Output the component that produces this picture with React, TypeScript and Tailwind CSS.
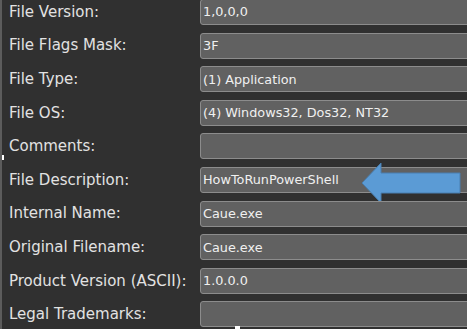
import React from 'react';

const ROWS: { label: string; value: string }[] = [
  { label: 'File Version:', value: '1,0,0,0' },
  { label: 'File Flags Mask:', value: '3F' },
  { label: 'File Type:', value: '(1) Application' },
  { label: 'File OS:', value: '(4) Windows32, Dos32, NT32' },
  { label: 'Comments:', value: '' },
  { label: 'File Description:', value: 'HowToRunPowerShell' },
  { label: 'Internal Name:', value: 'Caue.exe' },
  { label: 'Original Filename:', value: 'Caue.exe' },
  { label: 'Product Version (ASCII):', value: '1.0.0.0' },
  { label: 'Legal Trademarks:', value: '' },
];

function Arrow() {
  return (
    <svg className="absolute left-[160px] top-[-6px]" width="102" height="44" viewBox="0 0 102 44">
      <path d="M1 21 L20 1 L20 11 L99 11 L99 31 L20 31 L20 41 Z" fill="#5b9bd5" stroke="#4a7fb0" strokeWidth="1" />
    </svg>
  );
}

export default function App() {
  return (
    <div className="relative w-[467px] h-[329px] overflow-hidden bg-[#303030] border-l-2 border-[#5c5c5c]" style={{ fontFamily: 'Tahoma, "DejaVu Sans", sans-serif' }}>
      <div className="flex flex-col -mt-px">
        {ROWS.map((row) => (
          <div key={row.label} className="flex items-center h-[33.6px] pb-[7.6px]">
            <div className="w-[198px] shrink-0 pl-[7px] text-[15px] text-[#e2e2e2] whitespace-nowrap">{row.label}</div>
            <div className="relative flex-1 h-[26px] -mr-[40px] rounded-[3px] border border-[#8c8c8c] bg-[#616161] flex items-center pl-[2px] text-[12.8px] text-[#f0f0f0] whitespace-nowrap">
              {row.value}
              {row.value === 'HowToRunPowerShell' && <Arrow />}
            </div>
          </div>
        ))}
      </div>
      <div className="absolute left-[-2px] top-[155px] w-[4px] h-[5px] bg-white" />
      <div className="absolute left-[233px] top-[326px] w-[5px] h-[4px] bg-white" />
    </div>
  );
}
